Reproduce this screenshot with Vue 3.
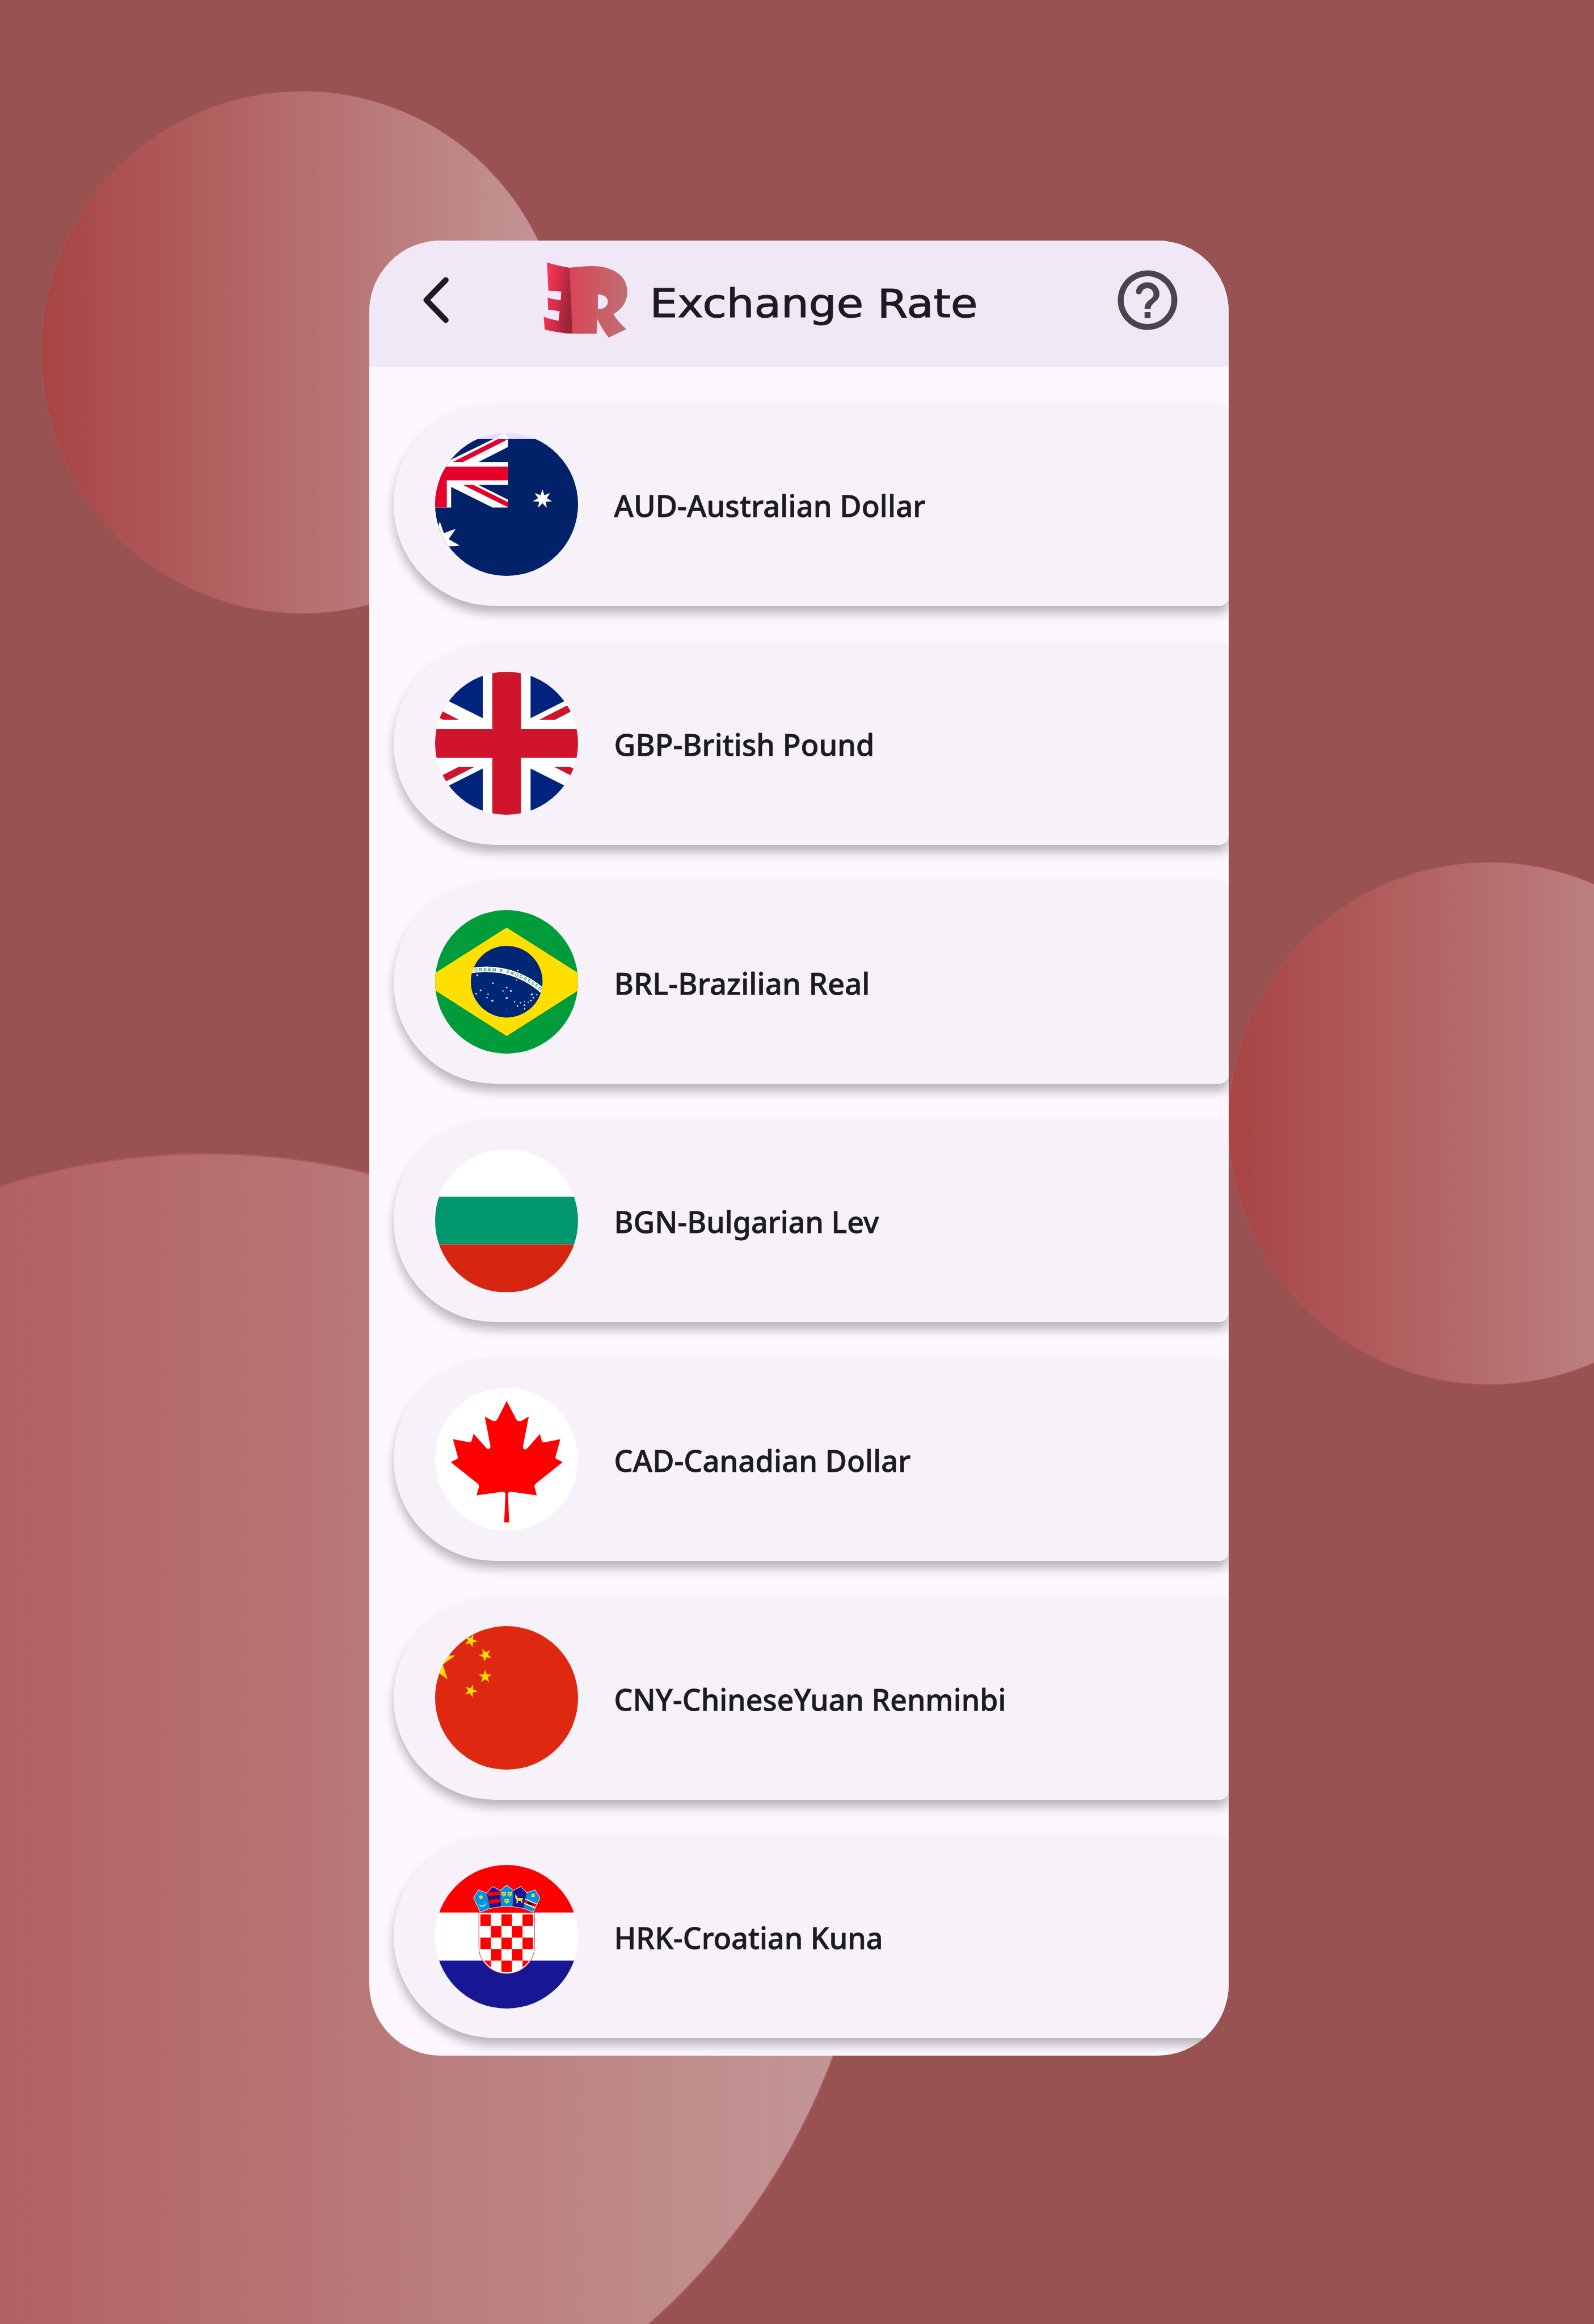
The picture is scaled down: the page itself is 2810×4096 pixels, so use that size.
<script setup>
const currencies = [
  { id: 'au', label: 'AUD-Australian Dollar', width: 549 },
  { id: 'gb', label: 'GBP-British Pound', width: 459 },
  { id: 'br', label: 'BRL-Brazilian Real', width: 451 },
  { id: 'bg', label: 'BGN-Bulgarian Lev', width: 467 },
  { id: 'ca', label: 'CAD-Canadian Dollar', width: 523 },
  { id: 'cn', label: 'CNY-ChineseYuan Renminbi', width: 691 },
  { id: 'hr', label: 'HRK-Croatian Kuna', width: 474 }
]

function star(cx, cy, points, outer, inner, rotation = -90) {
  const out = []
  for (let i = 0; i < points * 2; i++) {
    const r = i % 2 ? inner : outer
    const a = ((rotation + (i * 180) / points) * Math.PI) / 180
    out.push(`${(cx + r * Math.cos(a)).toFixed(1)},${(cy + r * Math.sin(a)).toFixed(1)}`)
  }
  return out.join(' ')
}

const brStars = [
  [842, 621, 6], [499, 661, 8], [829, 701, 5], [631, 728, 7], [747, 766, 7], [557, 770, 3],
  [527, 789, 8], [716, 793, 6], [782, 793, 8], [732, 811, 3], [489, 817, 7], [590, 819, 6],
  [581, 850, 6], [747, 853, 9], [626, 875, 9], [814, 886, 6], [864, 893, 6], [897, 883, 5],
  [929, 888, 5], [953, 874, 7], [972, 850, 7], [959, 822, 9], [1002, 826, 6], [838, 920, 7],
  [898, 913, 7], [899, 944, 6], [747, 953, 3]
]

const checks = []
for (let r = 0; r < 5; r++) {
  for (let c = 0; c < 5; c++) {
    if ((r + c) % 2 === 0) checks.push({ x: 524 + c * 89.2, y: 537 + r * 97.5 })
  }
}
</script>

<template>
  <main class="stage">
    <svg class="backdrop" viewBox="0 0 2810 4096" aria-hidden="true">
      <defs>
        <linearGradient id="bubble" x1="0" y1="0" x2="1" y2="0">
          <stop offset="0" stop-color="#a84444" />
          <stop offset="1" stop-color="#c49898" />
        </linearGradient>
      </defs>
      <circle cx="533" cy="621" r="460.5" fill="url(#bubble)" stroke="#a95555" stroke-width="1.5" />
      <circle cx="2626" cy="1980" r="460.5" fill="url(#bubble)" stroke="#a95555" stroke-width="1.5" />
      <circle cx="365" cy="3212" r="1178.5" fill="url(#bubble)" stroke="#ad5a5a" stroke-width="2.5" />
    </svg>

    <section class="phone">
      <header class="bar">
        <svg class="back" viewBox="140 94 100 150">
          <path d="M215 112.500L160 169L215 225.500" fill="none" stroke="#1d1b20" stroke-width="16" stroke-linecap="round" stroke-linejoin="round" />
        </svg>
        <svg class="logo" viewBox="870 235 420 650" preserveAspectRatio="none">
          <defs>
            <linearGradient id="logoE" gradientUnits="userSpaceOnUse" x1="885" y1="500" x2="1018" y2="512">
              <stop offset="0" stop-color="#f63757" />
              <stop offset="0.5" stop-color="#cf2c48" />
              <stop offset="1" stop-color="#9c2238" />
            </linearGradient>
            <linearGradient id="logoR" gradientUnits="userSpaceOnUse" x1="1004" y1="0" x2="1288" y2="0">
              <stop offset="0" stop-color="#d84555" />
              <stop offset="1" stop-color="#be7074" />
            </linearGradient>
          </defs>
          <path fill="url(#logoR)" fill-rule="evenodd" d="M1003 288Q1060 273 1113 273C1230 273 1288 370 1288 490C1288 575 1262 640 1219 680Q1243 745 1283 808L1196 878Q1163 805 1140 720L1137 845L1016 844ZM1143 512V640C1175 636 1192 612 1192 575C1192 540 1175 514 1143 512Z" />
          <path fill="url(#logoE)" d="M893 242Q940 268 1004 288L1018 843H990Q930 832 882 810L877 702Q905 722 950 735L955 656Q930 645 899 643L896 541Q925 555 960 563L963 490Q935 483 900 484Z" />
        </svg>
        <svg class="title" viewBox="0 0 585 211">
          <text x="1.500" y="134.500" textLength="578" lengthAdjust="spacingAndGlyphs">Exchange Rate</text>
        </svg>
        <svg class="help" viewBox="0 0 24 24">
          <path fill="#49454f" d="M11 18h2v-2h-2v2zm1-16C6.480 2 2 6.480 2 12s4.480 10 10 10 10-4.480 10-10S17.520 2 12 2zm0 18c-4.410 0-8-3.590-8-8s3.590-8 8-8 8 3.590 8 8-3.590 8-8 8zM12 6c-2.050 0-3.600 1.200-3.900 3-.1.600.4 1.050 1 1.050.5 0 .85-.35 1-.8C10.350 8.500 11 8 12 8c1.100 0 2 .9 2 2 0 2-3 1.750-3 5h2c0-2.250 3-2.500 3-5 0-2.210-1.790-4-4-4z" />
        </svg>
      </header>

      <ul class="list">
        <li v-for="c in currencies" :key="c.id" class="row">
          <svg v-if="c.id === 'au'" class="flag" viewBox="359 252 991 1024" preserveAspectRatio="none">
            <rect x="350" y="240" width="1010" height="1050" fill="#e8ddff" />
            <rect x="350" y="296" width="1010" height="990" fill="#012169" />
            <path fill="#fff" d="M380 488L845 254L864 292V352L660 460H864V624H660L864 730V786H757L470 638V786H340V488Z" />
            <path fill="#e4002b" d="M340 493H864V591H440V786H340ZM481 460H552L864 298L795 296ZM552 624H625L864 747V784Z" />
            <polygon fill="#fff" :points="star(1102, 725, 7, 69, 30.5)" />
            <polygon fill="#fff" :points="star(392, 1026, 7, 141, 62.6)" />
          </svg>

          <svg v-else-if="c.id === 'gb'" class="flag" viewBox="142 100 1210 1210">
            <rect x="130" y="90" width="1240" height="1240" fill="#fff" />
            <g v-for="r in [0, 180]" :key="r" :transform="`rotate(${r} 747 705)`">
              <path fill="#00247d" d="M545 0V492L-142 148V0ZM949 0V492L1636 148V0Z" />
              <path fill="#cf142b" d="M345 506H210L0 401V329ZM1020 506H1155L1494 330V264Z" />
            </g>
            <path fill="#cf142b" d="M626 90H868V584H1370V828H868V1330H626V828H130V584H626Z" />
          </svg>

          <svg v-else-if="c.id === 'br'" class="flag" viewBox="142 110 1210 1210">
            <rect x="130" y="100" width="1240" height="1240" fill="#009c3b" />
            <path fill="#ffdf00" d="M747 257L1467 715.500L747 1174L27 715.500Z" />
            <clipPath id="globe"><circle cx="747" cy="715" r="303" /></clipPath>
            <circle cx="747" cy="715" r="303" fill="#002776" />
            <circle cx="574" cy="1324" r="714" fill="none" stroke="#fff" stroke-width="46" clip-path="url(#globe)" />
            <path id="motto" fill="none" d="M474 631.200A700 700 0 0 1 1110 870" />
            <text class="motto" textLength="598"><textPath href="#motto">ORDEM E PROGRESSO</textPath></text>
            <circle v-for="(s, i) in brStars" :key="i" :cx="s[0]" :cy="s[1]" :r="s[2]" fill="#dfe6fa" />
          </svg>

          <svg v-else-if="c.id === 'bg'" class="flag" viewBox="0 0 3 3">
            <rect width="3" height="3" fill="#fff" />
            <rect y="1" width="3" height="1" fill="#00966e" />
            <rect y="2" width="3" height="1" fill="#d62612" />
          </svg>

          <svg v-else-if="c.id === 'ca'" class="flag" viewBox="142 100 1210 1210">
            <rect x="130" y="90" width="1240" height="1240" fill="#fff" />
            <path fill="#f00" d="M747 212L828 366Q836 383 852 383Q864 383 880 374L934 343L885 592Q882 618 903 620Q914 620 926 606L1028 489L1043 546Q1049 562 1064 562L1200 534L1160 682Q1158 696 1165 700L1220 728L992 910Q980 920 982 938L1002 1008L790 978Q760 974 759 1000L767 1237H726L736 1000Q735 974 706 978L492 1008L513 938Q516 920 503 910L275 728L329 700Q336 696 334 682L293 534L430 560Q446 562 451 546L467 488L568 600Q580 618 592 618Q612 616 609 590L562 343L620 374Q634 381 646 381Q660 380 668 366Z" />
          </svg>

          <svg v-else-if="c.id === 'cn'" class="flag" viewBox="142 138 1210 1210">
            <rect x="130" y="120" width="1240" height="1240" fill="#de2910" />
            <g fill="#ffde00">
              <polygon :points="star(141, 441.6, 5, 181, 69)" />
              <polygon :points="star(444, 262, 5, 58, 22, 4)" />
              <polygon :points="star(566, 382, 5, 58, 22, 28)" />
              <polygon :points="star(565, 565, 5, 58, 22)" />
              <polygon :points="star(444, 685, 5, 58, 22, 4)" />
            </g>
          </svg>

          <svg v-else class="flag" viewBox="142 119 1210 1210">
            <rect x="130" y="100" width="1240" height="421" fill="#f00" />
            <rect x="130" y="521" width="1240" height="406" fill="#fff" />
            <rect x="130" y="927" width="1240" height="420" fill="#171796" />
            <clipPath id="shieldInner"><path d="M522 530H972V815C972 930 870 1026 747 1026C624 1026 522 930 522 815Z" /></clipPath>
            <path d="M512 522H982V812C982 935 876 1037 747 1037C618 1037 512 935 512 812Z" fill="#fff" stroke="#d0444c" stroke-width="5" />
            <g clip-path="url(#shieldInner)">
              <rect v-for="(k, i) in checks" :key="i" :x="k.x" :y="k.y" width="89.2" height="97.5" fill="#f00" />
            </g>
            <path d="M523 520Q747 425 972 520Z" fill="#f00" />
            <g stroke-linejoin="round">
              <path fill="#0093dd" d="M510 328L578 357L608 486L523 517L467 396Z" />
              <path fill="#171796" d="M628 300L692 336L700 472L608 486L580 357Z" />
              <path fill="#0093dd" d="M747 289L804 334L797 472Q747 467 700 472L692 336Z" />
              <path fill="#171796" d="M868 300L916 354L888 486L797 472L804 334Z" />
              <path fill="#0093dd" d="M987 329L1028 396L972 517L888 486L916 354Z" />
              <path fill="#f00" d="M583 351Q635 343 689 345L692 371Q640 374 588 386ZM596 418Q645 405 693 405L695 436Q645 438 604 450Z" />
              <path fill="#fff" d="M906 403L1004 446L987 486L893 446Z" />
              <path fill="#e01020" d="M903 412L1000 452L990 476L896 439Z" />
              <path fill="#3a0d0d" d="M915 428L938 430L952 440L978 448L968 460L945 454L925 446Z" />
              <path fill="none" stroke="#f3d6e0" stroke-width="5" d="M523 517L467 396L510 328L578 357L628 300L692 336L747 289L804 334L868 300L916 354L987 329L1028 396L972 517L888 486Q747 452 608 486Z" />
            </g>
            <g fill="#e0dc48">
              <polygon :points="star(529, 391, 6, 20, 12)" />
              <polygon :points="star(970, 376, 6, 20, 12)" />
              <path d="M704 348H740V372L722 387L704 372ZM755 348H791V372L773 387L755 372ZM729 407H766V432L747 447L729 432Z" />
              <path d="M818 368L836 384L838 396L884 398L886 410L878 412L880 440L872 442L866 424L845 422L838 444L828 442L832 420L820 400Z" />
            </g>
            <path fill="none" stroke="#5a5a20" stroke-width="3" d="M712 360H732M722 360V378M763 360H783M773 360V378M737 420H757M747 420V438" />
            <path fill="none" stroke="#c01030" stroke-width="5" d="M830 370Q850 355 880 382" />
            <path fill="#fff" d="M507 448Q545 482 577 436Q570 470 540 470Q518 468 507 448Z" />
          </svg>

          <svg class="label" viewBox="0 0 760 120">
            <text x="1.500" y="82.300" :textLength="c.width" lengthAdjust="spacingAndGlyphs">{{ c.label }}</text>
          </svg>
        </li>
      </ul>
    </section>
  </main>
</template>

<style>
body {
  margin: 0;
}
</style>

<style scoped>
.stage {
  position: relative;
  box-sizing: border-box;
  width: 2810px;
  height: 4096px;
  padding: 423.5px 0 0 651.3px;
  overflow: hidden;
  background: #995252;
}
.backdrop {
  position: absolute;
  inset: 0;
  width: 2810px;
  height: 4096px;
}
.phone {
  position: relative;
  width: 1515px;
  height: 3199.5px;
  overflow: hidden;
  border-radius: 126px;
  background: #fef7ff;
}
.bar {
  display: flex;
  align-items: center;
  box-sizing: border-box;
  height: 223.5px;
  padding: 0 0 12.5px 87.5px;
  background: #f0e8f6;
}
.bar svg {
  flex: none;
}
.back {
  width: 62.5px;
  height: 93.75px;
}
.logo {
  width: 150.7px;
  height: 135.4px;
  margin-left: 154.6px;
}
.title {
  width: 585px;
  height: 211px;
  margin-left: 37.2px;
}
.title text {
  font: 400 69px "DejaVu Sans", sans-serif;
  fill: #1d1b20;
  stroke: #1d1b20;
  stroke-width: 1.2px;
}
.help {
  width: 126px;
  height: 126px;
  margin-left: 231.4px;
}
.list {
  display: flex;
  flex-direction: column;
  gap: 62.8px;
  margin: 0;
  padding: 63.3px 0 0 42.3px;
  list-style: none;
}
.row {
  display: flex;
  flex: none;
  align-items: center;
  box-sizing: border-box;
  height: 357.9px;
  padding-left: 73.4px;
  border-radius: 178px 16px 16px 178px;
  background: #f7f2fa;
  box-shadow: 0 13px 18px rgba(0, 0, 0, 0.27);
}
.flag {
  flex: none;
  width: 252.4px;
  height: 252.4px;
  border-radius: 50%;
  overflow: hidden;
}
.motto {
  font: 700 38px "Liberation Sans", sans-serif;
  fill: #2f9a5c;
}
.label {
  flex: none;
  width: 760px;
  height: 120px;
  margin-left: 61.6px;
}
.label text {
  font: 500 53px "Noto Sans", sans-serif;
  fill: #1d1b20;
  stroke: #1d1b20;
  stroke-width: 0.8px;
}
</style>
